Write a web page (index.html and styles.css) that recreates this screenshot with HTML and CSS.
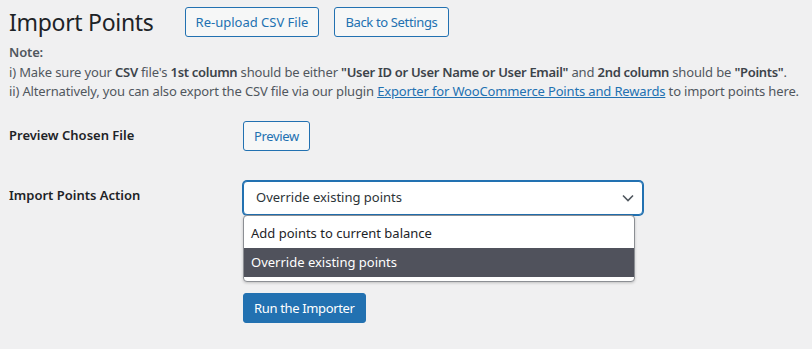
FILE: index.html
```html
<!DOCTYPE html>
<html lang="en">
<head>
  <meta charset="UTF-8">
  <title>Import Points</title>
  <link rel="stylesheet" href="styles.css">
</head>
<body>
  <div class="wrap">
    <div class="page-head">
      <h1>Import Points</h1>
      <a class="button" href="#">Re-upload CSV File</a>
      <a class="button tight" href="#">Back to Settings</a>
    </div>

    <div class="note">
      <div class="note-title">Note:</div>
      <div>i) Make sure your <b>CSV</b> file's <b>1st column</b> should be either <b>"User ID or User Name or User Email"</b> and <b>2nd column</b> should be <b>"Points"</b>.</div>
      <div>ii) Alternatively, you can also export the CSV file via our plugin <a href="#">Exporter for WooCommerce Points and Rewards</a> to import points here.</div>
    </div>

    <div class="form-table">
      <div class="form-row">
        <div class="form-label">Preview Chosen File</div>
        <div><a class="button tight" href="#">Preview</a></div>
      </div>
      <div class="form-row">
        <div class="form-label">Import Points Action</div>
        <div class="select-wrap">
          <div class="select">
            <span>Override existing points</span>
            <svg width="12" height="8" viewBox="0 0 12 8"><path d="M1 1.5l5 5 5-5" fill="none" stroke="#50575e" stroke-width="1.6"/></svg>
          </div>
          <div class="dropdown">
            <div class="option">Add points to current balance</div>
            <div class="option selected">Override existing points</div>
          </div>
        </div>
      </div>
      <div class="form-row submit-row">
        <div></div>
        <div><a class="button button-primary tight" href="#">Run the Importer</a></div>
      </div>
    </div>
  </div>
</body>
</html>
```

FILE: styles.css
```css
body {
  margin: 0;
  background: #f0f0f1;
  color: #3c434a;
  font-family: "Noto Sans", "Open Sans", sans-serif;
  font-size: 13px;
  line-height: 1.5;
}
.wrap {
  padding: 0 9px;
}
.page-head {
  display: flex;
  align-items: center;
  padding-top: 7px;
}
h1 {
  margin: 0 31px 0 0;
  font-size: 23px;
  font-weight: 400;
  line-height: 29px;
  color: #1d2327;
  letter-spacing: -0.3px;
}
.button {
  display: inline-block;
  box-sizing: border-box;
  height: 30px;
  line-height: 28px;
  padding: 0 10px;
  border: 1px solid #2271b1;
  border-radius: 3px;
  background: #f6f7f7;
  color: #2271b1;
  font-size: 13px;
  text-decoration: none;
  margin-right: 15px;
}
.button.tight {
  letter-spacing: -0.35px;
}
.button-primary {
  background: #2271b1;
  color: #fff;
}
.note {
  margin-top: 6px;
  color: #50575e;
  line-height: 19.5px;
  letter-spacing: -0.15px;
  white-space: nowrap;
}
.note-title {
  font-weight: 600;
}
.note b {
  font-weight: 600;
  color: #3c434a;
  letter-spacing: -0.3px;
}
.note a {
  color: #2271b1;
  text-decoration: underline;
}
.form-table {
  margin-top: 19px;
}
.form-row {
  display: grid;
  grid-template-columns: 234px 1fr;
  align-items: start;
  margin-bottom: 30px;
}
.form-label {
  color: #1d2327;
  font-size: 13px;
  font-weight: 600;
  padding-top: 5px;
}
.select-wrap {
  position: relative;
  width: 400px;
}
.select {
  display: flex;
  align-items: center;
  justify-content: space-between;
  box-sizing: border-box;
  height: 34px;
  padding: 0 8px 0 12px;
  background: #fff;
  border: 1px solid #2271b1;
  border-radius: 4px;
  box-shadow: 0 0 0 1px #2271b1;
  color: #2c3338;
  font-size: 13px;
}
.dropdown {
  position: absolute;
  top: 34px;
  left: 0;
  width: 392px;
  box-sizing: border-box;
  padding: 3px 0 4px;
  background: #fff;
  border: 1px solid #8c8f94;
  border-radius: 4px;
  box-shadow: 0 1px 3px rgba(0, 0, 0, 0.2);
  font-size: 13px;
  color: #1d2327;
}
.option {
  height: 29px;
  line-height: 29px;
  padding: 0 7px;
}
.option.selected {
  background: #50525c;
  color: #fff;
}
.submit-row {
  margin-top: 78px;
}
```
